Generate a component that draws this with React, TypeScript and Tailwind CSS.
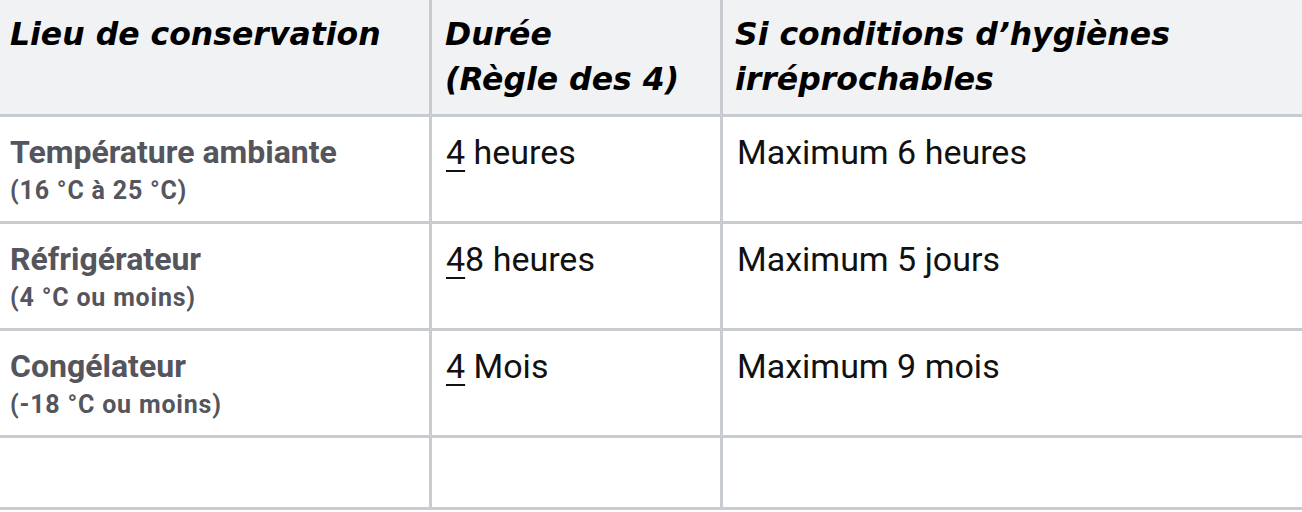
const rows = [
  { place: "Température ambiante", range: "(16 °C à 25 °C)", lead: "4", rest: " heures", max: "Maximum 6 heures" },
  { place: "Réfrigérateur", range: "(4 °C ou moins)", lead: "4", rest: "8 heures", max: "Maximum 5 jours" },
  { place: "Congélateur", range: "(-18 °C ou moins)", lead: "4", rest: " Mois", max: "Maximum 9 mois" },
];

const head = "font-['DejaVu_Sans',sans-serif] text-[31.5px] font-bold italic leading-[45px] text-black";
const line = "border-[#c8cbcf]";

export default function App() {
  return (
    <div className="w-[1302px] h-[512px] bg-white font-['Roboto',sans-serif]">
      <div className="grid grid-cols-[432px_291px_1fr]">
        <div className={`bg-[#f1f2f4] border-r-[3px] border-b-[3px] ${line} pl-[10px] pt-[12px] pb-[12px] h-[117px]`}>
          <div className={head}>Lieu de conservation</div>
        </div>
        <div className={`bg-[#f1f2f4] border-r-[3px] border-b-[3px] ${line} pl-[13px] pt-[12px] h-[117px]`}>
          <div className={head}>Durée</div>
          <div className={head}>(Règle des 4)</div>
        </div>
        <div className={`bg-[#f1f2f4] border-b-[3px] ${line} pl-[12px] pt-[12px] h-[117px]`}>
          <div className={head}>Si conditions d’hygiènes</div>
          <div className={head}>irréprochables</div>
        </div>

        {rows.map((r) => (
          <div key={r.place} className="contents">
            <div className={`border-r-[3px] border-b-[3px] ${line} pl-[10px] pt-[14px] h-[107px]`}>
              <div className="text-[32px] font-bold leading-[42px] text-[#54555d]">{r.place}</div>
              <div className="text-[25px] font-bold leading-[36px] tracking-[0.8px] text-[#54555d]">{r.range}</div>
            </div>
            <div className={`border-r-[3px] border-b-[3px] ${line} pl-[14px] pt-[14px]`}>
              <div className="text-[34px] leading-[42px] text-[#111]">
                <span className="underline decoration-2 underline-offset-[6px]">{r.lead}</span>
                {r.rest}
              </div>
            </div>
            <div className={`border-b-[3px] ${line} pl-[14px] pt-[14px]`}>
              <div className="text-[34px] leading-[42px] text-[#111]">{r.max}</div>
            </div>
          </div>
        ))}

        <div className={`border-r-[3px] border-b-[3px] ${line} h-[72px]`} />
        <div className={`border-r-[3px] border-b-[3px] ${line}`} />
        <div className={`border-b-[3px] ${line}`} />
      </div>
    </div>
  );
}
